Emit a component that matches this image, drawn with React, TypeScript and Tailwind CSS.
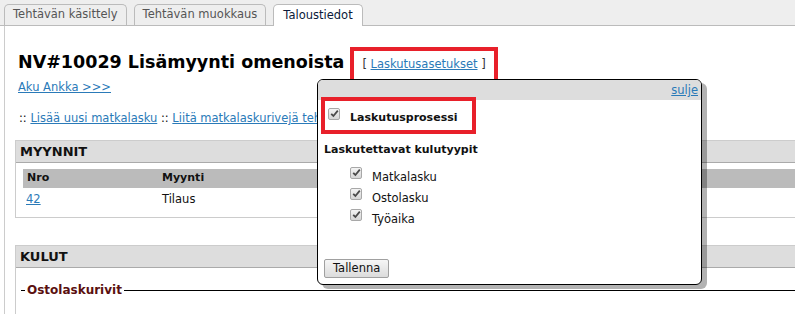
import type { ReactNode } from 'react';

const font = "font-['DejaVu_Sans',Verdana,sans-serif]";

function Check() {
  return (
    <span className="inline-flex w-[12px] h-[12px] shrink-0 items-center justify-center rounded-[2px] border border-[#a8a8a8] bg-gradient-to-b from-[#f4f4f4] to-[#d6d6d6]">
      <svg width="9" height="9" viewBox="0 0 9 9">
        <path d="M1.2 4.8 L3.4 7 L7.8 1.6" fill="none" stroke="#4a4a4a" strokeWidth="1.8" />
      </svg>
    </span>
  );
}

function Tab({ label, active }: { label: string; active?: boolean }) {
  return (
    <div
      className={`flex items-center rounded-t-[5px] border border-b-0 border-[#bbb] text-[11.5px] ${
        active ? 'h-[22px] -mb-px px-[9px] bg-white text-[#0b1a3a]' : 'h-[21px] px-[8px] bg-[#eee] text-[#555]'
      }`}
    >
      {label}
    </div>
  );
}

function Panel({ title, children }: { title: string; children: ReactNode }) {
  return (
    <div className="w-[820px] border border-[#ccc]">
      <div className="h-[22px] leading-[22px] bg-[#ddd] border-b border-[#aaa] pl-[4px] text-[13px] font-bold text-[#111]">
        {title}
      </div>
      {children}
    </div>
  );
}

export default function App() {
  return (
    <div className={`relative w-[795px] h-[314px] overflow-hidden bg-white text-[11.5px] text-[#111] ${font}`}>
      {/* välilehdet */}
      <div className="h-[26px] bg-[#eee] border-b border-[#bbb] flex items-end pl-[4px] gap-[7px]">
        <Tab label="Tehtävän käsittely" />
        <Tab label="Tehtävän muokkaus" />
        <Tab label="Taloustiedot" active />
      </div>

      <div className="ml-[4px] border-l border-[#ccc] pl-[10px] h-[300px]">
        <div className="pl-[3px] pt-[24px] flex items-baseline">
          <h1 className="text-[17.5px] leading-[24px] font-bold text-black">NV#10029 Lisämyynti omenoista</h1>
          <span className="ml-[18px] text-[#333]">
            [ <a className="text-[#2a7ab8] underline">Laskutusasetukset</a> ]
          </span>
        </div>
        <div className="pl-[3px] mt-[6px] leading-[14px]">
          <a className="text-[#2a7ab8] underline">Aku Ankka &gt;&gt;&gt;</a>
        </div>
        <div className="pl-[4px] mt-[17px] leading-[14px] whitespace-nowrap">
          :: <a className="text-[#2a7ab8] underline">Lisää uusi matkalasku</a> ::{' '}
          <a className="text-[#2a7ab8] underline">Liitä matkalaskurivejä tehtävään</a>
        </div>

        <div className="mt-[15px]">
          <Panel title="MYYNNIT">
            <div className="mt-[6px] ml-[7px] pb-[5px]">
              <div className="flex h-[19px] items-center bg-[#bbb] font-bold text-[11px]">
                <div className="w-[139px] pl-[4px]">Nro</div>
                <div>Myynti</div>
              </div>
              <div className="flex h-[24px] items-center">
                <div className="w-[139px] pl-[3px]">
                  <a className="text-[#2a7ab8] underline">42</a>
                </div>
                <div>Tilaus</div>
              </div>
            </div>
          </Panel>
        </div>

        <div className="mt-[27px]">
          <Panel title="KULUT">
            <div className="mt-[15px] ml-[5px] flex items-center h-[14px]">
              <div className="w-[4px] h-px bg-black" />
              <span className="px-[2px] font-bold text-[12px] text-[#5a1010]">Ostolaskurivit</span>
              <div className="flex-1 h-px bg-black" />
            </div>
            <div className="h-[20px]" />
          </Panel>
        </div>
      </div>

      {/* korostus */}
      <div className="absolute left-[350px] top-[47px] w-[148px] h-[42px] border-[4px] border-[#e8202a]" />

      {/* asetukset-ikkuna */}
      <div className="absolute left-[317px] top-[79px] w-[385px] h-[206px] border border-black rounded-[6px] bg-white shadow-[5px_4px_0_rgba(0,0,0,0.3)]">
        <div className="h-[20px] leading-[20px] bg-[#ddd] rounded-t-[5px] text-right pr-[3px]">
          <a className="text-[#2a7ab8] underline">sulje</a>
        </div>
        <div className="pl-[6px]">
          <div className="mt-[10px] h-[16px] flex items-center pl-[4px]">
            <span className="mb-[6px]">
              <Check />
            </span>
            <span className="ml-[10px] font-bold text-[11px]">Laskutusprosessi</span>
          </div>
          <div className="mt-[16px] leading-[16px] font-bold text-[11px]">Laskutettavat kulutyypit</div>
          <div className="mt-[9px] pl-[26px]">
            {['Matkalasku', 'Ostolasku', 'Työaika'].map((t) => (
              <div key={t} className="h-[21px] flex items-center">
                <span className="mb-[7px]">
                  <Check />
                </span>
                <span className="ml-[10px]">{t}</span>
              </div>
            ))}
          </div>
          <button className="mt-[29px] h-[19px] px-[8px] border border-[#a0a0a0] rounded-[2px] bg-gradient-to-b from-[#f6f6f6] to-[#dcdcdc] text-[11.5px] text-[#111] leading-[17px]">
            Tallenna
          </button>
        </div>
        <div className="absolute left-[3px] top-[17px] w-[155px] h-[37px] border-[4px] border-[#e8202a]" />
      </div>
    </div>
  );
}
